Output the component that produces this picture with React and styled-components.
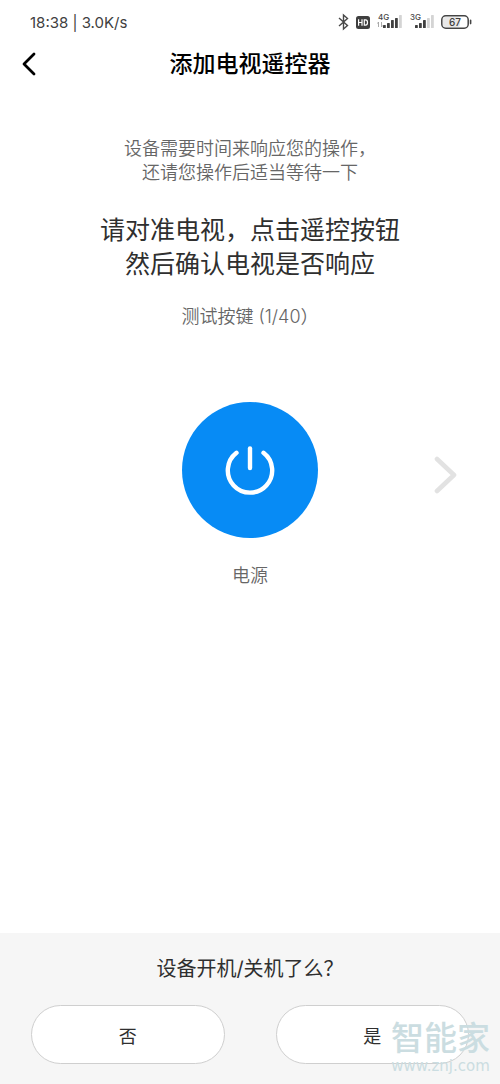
import React from 'react';
import styled, { createGlobalStyle } from 'styled-components';

const GlobalStyle = createGlobalStyle`
  * {
    box-sizing: border-box;
  }
  body {
    margin: 0;
    background: #ffffff;
    color: #2f2f2f;
    font-family: Inter, "Noto Sans CJK SC", sans-serif;
  }
  button {
    font-family: inherit;
    color: inherit;
    cursor: pointer;
  }
`;

const Page = styled.div`
  display: flex;
  flex-direction: column;
  min-height: 100vh;
`;

// Phone status bar
const StatusBar = styled.div`
  display: flex;
  align-items: center;
  justify-content: space-between;
  height: 44px;
  padding: 0 28px 0 30px;
  color: #404040;
`;

const Clock = styled.span`
  font-size: 15px;
  font-weight: 400;
`;

const StatusIcons = styled.div`
  display: flex;
  align-items: center;
  gap: 7px;
`;

// Header with the back button and the title
const Header = styled.header`
  display: grid;
  grid-template-columns: 44px 1fr 44px;
  align-items: center;
  height: 40px;
  padding: 0 8px;
`;

const IconButton = styled.button`
  display: flex;
  align-items: center;
  justify-content: center;
  width: 44px;
  height: 40px;
  padding: 0;
  border: none;
  background: none;
`;

const NextButton = styled(IconButton)`
  justify-self: end;
  height: 50px;
  padding-top: 10px;
`;

const Title = styled.h1`
  margin: 0;
  font-size: 23px;
  font-weight: 500;
  line-height: 34px;
  text-align: center;
  color: #000000;
`;

const Main = styled.main`
  flex: 1;
  padding-top: 53px;
  text-align: center;
`;

const Hint = styled.p`
  margin: 0;
  font-size: 18px;
  font-weight: 350;
  line-height: 24px;
  color: #666666;
`;

const Instruction = styled.h2`
  margin: 28px 0 24px;
  font-size: 25px;
  font-weight: 400;
  line-height: 34px;
`;

// Row with the remote key in the middle and the next arrow on the right
const KeyRow = styled.div`
  display: grid;
  grid-template-columns: 1fr auto 1fr;
  align-items: center;
  margin: 73px 0 26px;
  padding: 0 32px;
`;

const PowerButton = styled.button`
  display: flex;
  grid-column: 2;
  align-items: center;
  justify-content: center;
  width: 136px;
  height: 136px;
  padding: 0;
  border: none;
  border-radius: 50%;
  background: #078bf5;
`;

const Footer = styled.footer`
  position: relative;
  padding: 20px 31px;
  background: #f6f6f6;
`;

const Question = styled.p`
  margin: 0 0 20px;
  font-size: 20px;
  line-height: 32px;
  text-align: center;
`;

const Answers = styled.div`
  display: grid;
  grid-template-columns: 1fr 1fr;
  gap: 51px;
`;

const AnswerButton = styled.button`
  height: 59px;
  padding: 0;
  border: 1px solid #cfcfcf;
  border-radius: 30px;
  background: #ffffff;
  font-size: 18px;
`;

// Site mark that lies over the corner of the footer
const Watermark = styled.div`
  position: absolute;
  right: 10px;
  bottom: 8px;
  color: #cbdde1;
  text-align: center;
  pointer-events: none;
`;

const MarkName = styled.div`
  font-size: 33px;
  font-weight: 500;
  line-height: 36px;
`;

const MarkUrl = styled.div`
  font-family: "DejaVu Sans", sans-serif;
  font-size: 15px;
  line-height: 20px;
`;

function BluetoothIcon() {
  return (
    <svg width="11" height="18" viewBox="0 0 11 18" fill="none" stroke="#484848" strokeWidth="1.4">
      <path d="M1 5 L9.5 12.5 L5.5 16 V2 L9.5 5.5 L1 13" />
    </svg>
  );
}

function HdIcon() {
  return (
    <svg width="14" height="13" viewBox="0 0 14 13">
      <rect width="14" height="13" rx="2.5" fill="#3f3f3f" />
      <path d="M2.6 3.2v6.6M6 3.2v6.6M2.6 6.5h3.4M8.3 3.8v5.4h1.2q2 0 2-2.7t-2-2.7z" fill="none" stroke="#ffffff" strokeWidth="1.2" />
    </svg>
  );
}

function SignalIcon({ label, level, data }) {
  const bars = [3, 5, 8, 10, 13];
  return (
    <svg width="25" height="24" viewBox="0 0 25 24" overflow="visible">
      <text x="1" y="10" fontSize="8" fontWeight="500" fontFamily="Inter, sans-serif" fill="#484848">{label}</text>
      {data && <path d="M1.5 17v-5l-1 1.5M4.5 12v5l1-1.5" stroke="#a0a0a0" strokeWidth="0.9" fill="none" />}
      {bars.map((h, i) => (
        <rect key={h} x={6 + i * 4} y={18 - h} width="2.8" height={h} rx="0.6" fill={i < level ? '#404040' : '#d4d4d4'} />
      ))}
    </svg>
  );
}

function BatteryIcon() {
  return (
    <svg width="31" height="14" viewBox="0 0 31 14">
      <rect x="2" y="2" width="17" height="10" rx="2.5" fill="#e8e8e8" />
      <rect x="0.8" y="0.8" width="26.4" height="12.4" rx="4" fill="none" stroke="#444444" strokeWidth="1.5" />
      <path d="M29.6 5.4v3.2" stroke="#444444" strokeWidth="1.6" strokeLinecap="round" />
      <text x="14" y="10.5" textAnchor="middle" fontSize="10" fontWeight="500" fontFamily="Inter, sans-serif" fill="#404040">67</text>
    </svg>
  );
}

export default function App() {
  return (
    <>
      <GlobalStyle />
      <Page>
        <StatusBar>
          <Clock>18:38 | 3.0K/s</Clock>
          <StatusIcons>
            <BluetoothIcon />
            <HdIcon />
            <SignalIcon label="4G" level={4} data />
            <SignalIcon label="3G" level={3} />
            <BatteryIcon />
          </StatusIcons>
        </StatusBar>
        <Header>
          <IconButton type="button" aria-label="返回">
            <svg width="16" height="24" viewBox="0 0 16 24" fill="none" stroke="#000000" strokeWidth="2.8" strokeLinecap="round" strokeLinejoin="round">
              <path d="M12 2 L2 12 L12 22" />
            </svg>
          </IconButton>
          <Title>添加电视遥控器</Title>
        </Header>
        <Main>
          <Hint>
            设备需要时间来响应您的操作，<br />
            还请您操作后适当等待一下
          </Hint>
          <Instruction>
            请对准电视，点击遥控按钮<br />
            然后确认电视是否响应
          </Instruction>
          <Hint>测试按键 (1/40）</Hint>
          <KeyRow>
            <PowerButton type="button" aria-label="电源">
              <svg width="50" height="50" viewBox="0 0 50 50" fill="none" stroke="#ffffff" strokeWidth="4.4" strokeLinecap="round">
                <path d="M25 3.5V23" />
                <path d="M11.5 7.8 A22.2 22.2 0 1 0 38.5 7.8" />
              </svg>
            </PowerButton>
            <NextButton type="button" aria-label="下一个">
              <svg width="24" height="40" viewBox="0 0 24 40" fill="none" stroke="#e2e2e2" strokeWidth="4.6" strokeLinecap="round" strokeLinejoin="round">
                <path d="M3 4 L20 20 L3 36" />
              </svg>
            </NextButton>
          </KeyRow>
          <Hint>电源</Hint>
        </Main>
        <Footer>
          <Question>设备开机/关机了么？</Question>
          <Answers>
            <AnswerButton type="button">否</AnswerButton>
            <AnswerButton type="button">是</AnswerButton>
          </Answers>
          <Watermark>
            <MarkName>智能家</MarkName>
            <MarkUrl>www.znj.com</MarkUrl>
          </Watermark>
        </Footer>
      </Page>
    </>
  );
}
